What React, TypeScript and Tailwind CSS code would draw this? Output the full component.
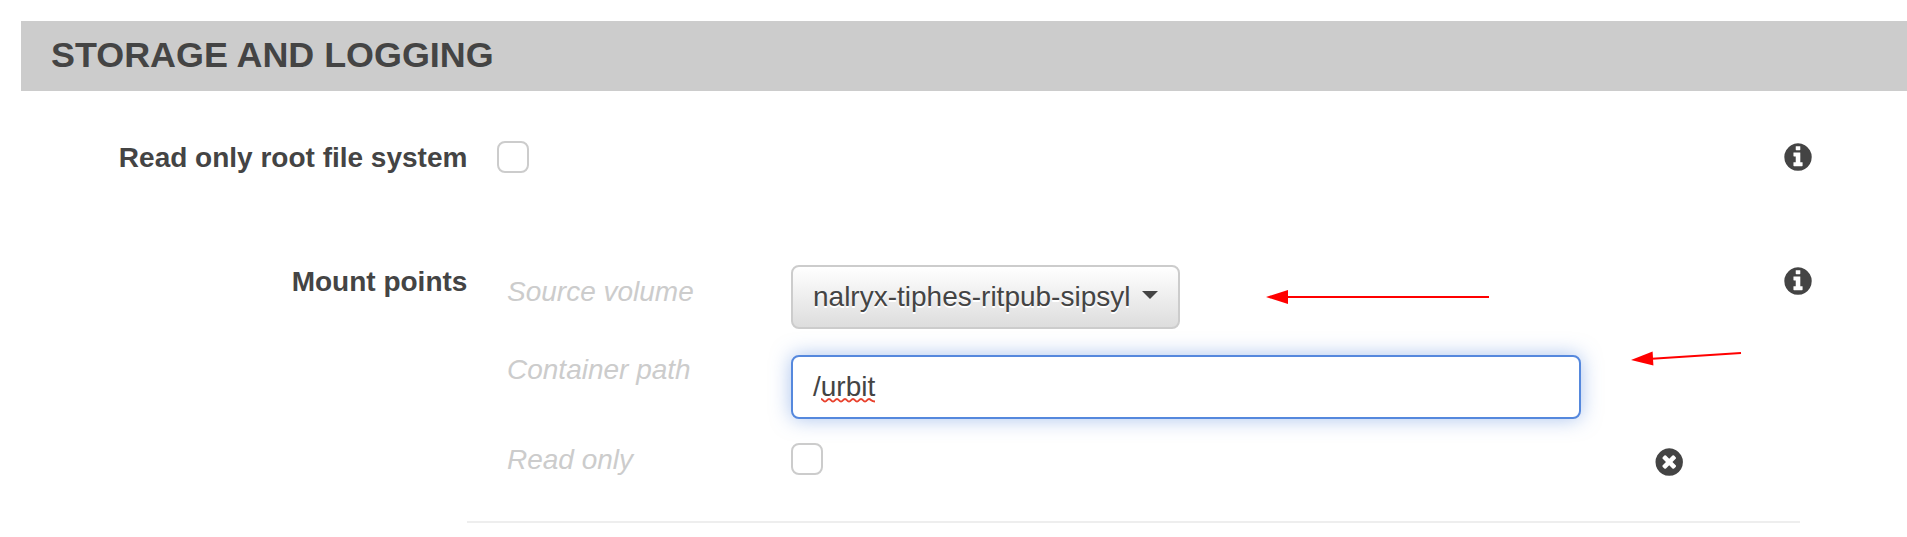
import type { ReactNode } from "react";

function InfoIcon() {
  return (
    <svg className="block size-7" viewBox="-17 111 1568 1568" fill="#444444" aria-hidden="true">
      <path d="M1024 1376v-160q0-14-9-23t-23-9h-96v-512q0-14-9-23t-23-9h-320q-14 0-23 9t-9 23v160q0 14 9 23t23 9h96v320h-96q-14 0-23 9t-9 23v160q0 14 9 23t23 9h448q14 0 23-9t9-23zm-128-896v-160q0-14-9-23t-23-9h-192q-14 0-23 9t-9 23v160q0 14 9 23t23 9h192q14 0 23-9t9-23zm640 416q0 209-103 385.500t-279.500 279.500-385.500 103-385.500-103-279.500-279.500-103-385.500 103-385.500 279.500-279.500 385.500-103 385.500 103 279.500 279.500 103 385.500z" />
    </svg>
  );
}

function RemoveIcon() {
  return (
    <svg className="block size-7" viewBox="-28 111 1568 1568" fill="#444444" aria-hidden="true">
      <path d="M1149 1122q0-26-19-45l-181-181 181-181q19-19 19-45 0-27-19-46l-90-90q-19-19-46-19-26 0-45 19l-181 181-181-181q-19-19-45-19-27 0-46 19l-90 90q-19 19-19 46 0 26 19 45l181 181-181 181q-19 19-19 45 0 27 19 46l90 90q19 19 46 19 26 0 45-19l181-181 181 181q19 19 45 19 27 0 46-19l90-90q19-19 19-46zm387-226q0 209-103 385.500t-279.500 279.500-385.500 103-385.500-103-279.500-279.500-103-385.500 103-385.500 279.500-279.500 385.500-103 385.500 103 279.500 279.500 103 385.500z" />
    </svg>
  );
}

function Checkbox() {
  return <div role="checkbox" aria-checked="false" className="size-8 shrink-0 rounded-lg border-2 border-[#cccccc] bg-white" />;
}

function FieldLabel({ children }: { children: ReactNode }) {
  return <div className="w-[284px] shrink-0 text-[#cccccc] italic">{children}</div>;
}

export default function App() {
  return (
    <main className="relative h-[537px] overflow-hidden bg-white pt-[21px] font-['Liberation_Sans',Arial,sans-serif] text-[28px] leading-10 text-[#444444]">
      <header className="ml-[21px] h-[70px] bg-[#cccccc] pt-[14px] pl-[30px]">
        <h1 className="text-[35.900px] leading-10 font-bold">STORAGE AND LOGGING</h1>
      </header>

      <section className="mt-[46px] flex h-[124px] items-start">
        <div className="mt-px w-[467.400px] text-right font-bold">Read only root file system</div>
        <div className="mt-1 ml-[29.600px]">
          <Checkbox />
        </div>
        <div className="mt-1.5 mr-[95px] ml-auto">
          <InfoIcon />
        </div>
      </section>

      <section className="flex h-[262px] items-start">
        <div className="mt-px -mr-[0.400px] w-[467.400px] text-right font-bold">Mount points</div>
        <div className="h-[262px] w-[1333px] border-b-2 border-[#eeeeee] pt-1 pl-10">
          <div className="flex h-[90px] items-start">
            <div className="pt-[7px]">
              <FieldLabel>Source volume</FieldLabel>
            </div>
            <button className="flex h-16 w-[389px] items-center rounded-lg border-2 border-[#cccccc] bg-linear-to-b from-white to-[#dddddd] pl-5 text-shadow-[0_2px_0_#ffffff]">
              <span>nalryx-tiphes-ritpub-sipsyl</span>
              <svg className="ml-3 -mt-1 h-2 w-4" viewBox="0 0 16 8" fill="#444444" aria-hidden="true">
                <path d="M0 0H16L8 8Z" />
              </svg>
            </button>
          </div>
          <div className="flex h-[88px] items-start">
            <div className="-mt-[5px]">
              <FieldLabel>Container path</FieldLabel>
            </div>
            <div className="flex h-16 w-[790px] items-center rounded-lg border-2 border-[#5588dd] bg-white pl-5 shadow-[0_0_20px_rgba(85,136,221,0.5)]">
              <span>/</span>
              <span className="relative">
                urbit
                <svg className="absolute top-[31px] left-0 h-[5px] w-[54px]" viewBox="0 0 54 5" fill="none" aria-hidden="true">
                  <path d="M0 1C2 1 2 3.500 4 3.500S6 1 8 1 10 3.500 12 3.500 14 1 16 1 18 3.500 20 3.500 22 1 24 1 26 3.500 28 3.500 30 1 32 1 34 3.500 36 3.500 38 1 40 1 42 3.500 44 3.500 46 1 48 1 50 3.500 54 3.500" stroke="#e8412d" strokeWidth="2" />
                </svg>
              </span>
            </div>
          </div>
          <div className="flex items-start">
            <div className="-mt-[3px]">
              <FieldLabel>Read only</FieldLabel>
            </div>
            <Checkbox />
            <div className="mt-[5px] ml-[832px]">
              <RemoveIcon />
            </div>
          </div>
        </div>
        <div className="mt-1.5 -ml-4">
          <InfoIcon />
        </div>
      </section>

      <svg className="pointer-events-none absolute top-[285px] left-[1260px] h-[90px] w-[490px]" viewBox="1260 285 490 90" fill="#ff0000" stroke="none" aria-hidden="true">
        <path d="M1266 297L1288 290V304Z" />
        <path d="M1287 297H1489" stroke="#ff0000" strokeWidth="2" />
        <path d="M1631 360L1652.600 351.600L1653.400 365.600Z" />
        <path d="M1652 358.700L1741 353" stroke="#ff0000" strokeWidth="2" />
      </svg>
    </main>
  );
}
